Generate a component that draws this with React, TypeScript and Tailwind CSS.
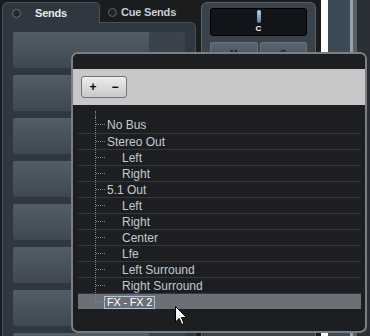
import React from 'react';

type Row = { label: string; level: 1 | 2; selected?: boolean };

const rows: Row[] = [
  { label: 'No Bus', level: 1 },
  { label: 'Stereo Out', level: 1 },
  { label: 'Left', level: 2 },
  { label: 'Right', level: 2 },
  { label: '5.1 Out', level: 1 },
  { label: 'Left', level: 2 },
  { label: 'Right', level: 2 },
  { label: 'Center', level: 2 },
  { label: 'Lfe', level: 2 },
  { label: 'Left Surround', level: 2 },
  { label: 'Right Surround', level: 2 },
  { label: 'FX - FX 2', level: 1, selected: true },
];

function SendSlot() {
  return (
    <div className="flex h-[36px] w-[172px] shrink-0 overflow-hidden rounded-[2px] bg-gradient-to-b from-[#525d68] to-[#3f4852]">
      <div className="flex-1" />
      <div className="w-[36px] bg-[#3a434c]" />
    </div>
  );
}

function TreeGuide({ last }: { last?: boolean }) {
  return (
    <div className="relative h-full w-[10px] shrink-0">
      <div className={`absolute left-0 top-0 w-0 border-l border-dotted border-[#7d838a] ${last ? 'h-[9px]' : 'h-full'}`} />
      <div className="absolute left-[1px] top-[7px] w-[9px] border-t border-dotted border-[#7d838a]" />
    </div>
  );
}

function BusPicker() {
  return (
    <div className="absolute left-[71px] top-[52px] flex h-[281px] w-[296px] flex-col overflow-hidden rounded-[7px] border-2 border-[#7b7e83] bg-[#1d1e21]">
      <div className="h-[15px] shrink-0 bg-[#1e1f22]" />
      <div className="h-[36px] shrink-0 bg-[#c8c8c8] pl-[8px] pt-[7px]">
        <div className="flex h-[22px] w-[46px] rounded-[3px] border border-[#6f757b] bg-gradient-to-b from-[#ececec] to-[#c9c9c9] text-[12px] font-bold leading-[20px] text-black">
          <span className="flex-1 text-center">+</span>
          <span className="flex-1 text-center">−</span>
        </div>
      </div>
      <div className="flex-1 pl-[5px] pr-[4px] pt-[6px]">
        <div className="flex h-[6px]">
          <div className="w-[17px]" />
          <div className="h-full border-l border-dotted border-[#7d838a]" />
        </div>
        <div className="flex flex-col">
          {rows.map((r, i) => (
            <div
              key={i}
              className={`flex h-[16px] items-center ${i > 0 ? 'border-t border-[#35373b]' : ''} ${r.selected ? 'border-[#6b7077] bg-[#6b7077]' : ''}`}
            >
              <div className="w-[17px] shrink-0" />
              <TreeGuide last={i === rows.length - 1} />
              {r.selected ? (
                <span className="ml-[-1px] mt-[2px] h-[13px] border border-[#a9c5dd] bg-[#6b7077] px-[2px] text-[11px] leading-[11px] tracking-[-0.2px] text-white">
                  {r.label}
                </span>
              ) : (
                <span className={`${r.level === 1 ? 'ml-[2px]' : 'ml-[17px]'} text-[12px] leading-[14px] text-[#c3cad2]`}>
                  {r.label}
                </span>
              )}
            </div>
          ))}
        </div>
      </div>
    </div>
  );
}

export default function App() {
  return (
    <div
      className="relative flex h-[336px] w-[370px] items-start overflow-hidden bg-[#1b1c1e]"
      style={{ fontFamily: '"Liberation Sans", Arial, sans-serif' }}
    >
      {/* Sends panel */}
      <div className="ml-[2px] mt-[2px] flex h-[334px] w-[194px] shrink-0 flex-col">
        <div className="flex h-[20px] shrink-0 items-end">
          <div className="relative z-10 -mb-px flex h-[21px] w-[98px] items-center gap-[14px] rounded-tl-[6px] rounded-tr-[5px] border border-b-0 border-[#4b535c] bg-[#2f3741] pl-[9px]">
            <div className="h-[9px] w-[9px] rounded-full border border-[#6a7077] bg-[#23282e]" />
            <span className="text-[11px] font-bold tracking-[-0.2px] text-[#e6eaee]">Sends</span>
          </div>
          <div className="flex h-[20px] items-center gap-[4px] pl-[8px]">
            <div className="h-[9px] w-[9px] rounded-full border border-[#60666d] bg-[#202328]" />
            <span className="text-[11px] font-bold tracking-[-0.2px] text-[#c6ced6]">Cue Sends</span>
          </div>
        </div>
        <div className="flex flex-1 flex-col gap-[7px] overflow-hidden rounded-tr-[6px] border border-b-0 border-[#485059] bg-[#2f3741] px-[10px] pt-[9px]">
          {Array.from({ length: 8 }).map((_, i) => (
            <SendSlot key={i} />
          ))}
        </div>
      </div>

      {/* channel section */}
      <div className="ml-[5px] mt-[2px] h-[334px] w-[115px] shrink-0 rounded-t-[6px] border border-b-0 border-[#59626b] bg-[#3a434c] px-[8px] pt-[5px]">
        <div className="flex h-[28px] flex-col items-center rounded-[3px] border border-black bg-[#111418]">
          <div className="mt-[1px] h-[13px] w-[4px] rounded-full bg-gradient-to-b from-[#b9d3e8] to-[#5f7e9c]" />
          <span className="mt-[2px] text-[8px] font-bold leading-[8px] text-white">C</span>
        </div>
        <div className="mt-[6px] flex gap-[2px]">
          <div className="flex h-[20px] flex-1 justify-center rounded-[2px] border border-[#6a737c] bg-gradient-to-b from-[#5a646f] to-[#48515b] pt-[4px] text-[9px] font-bold text-[#15181b]">M</div>
          <div className="flex h-[20px] flex-1 justify-center rounded-[2px] border border-[#6a737c] bg-gradient-to-b from-[#5a646f] to-[#48515b] pt-[4px] text-[9px] font-bold text-[#15181b]">S</div>
        </div>
      </div>

      {/* right edge strip */}
      <div className="flex h-[336px] flex-1">
        <div className="w-[5px] bg-[#1b1c1e]" />
        <div className="w-[7px] bg-white" />
        <div className="w-[22px] bg-[#3c4957]" />
        <div className="w-[3px] bg-[#9aa1a8]" />
        <div className="w-[4px] bg-[#56606b]" />
        <div className="flex-1 bg-[#2b3036]" />
      </div>

      <BusPicker />

      {/* mouse pointer */}
      <svg className="absolute left-[175px] top-[306px]" width="13" height="20" viewBox="0 0 13 20">
        <path d="M0.5 0.5 L0.5 16 L4.2 12.4 L6.8 18.5 L9 17.6 L6.5 11.6 L11.5 11.6 Z" fill="white" stroke="black" strokeWidth="1" />
      </svg>
    </div>
  );
}
